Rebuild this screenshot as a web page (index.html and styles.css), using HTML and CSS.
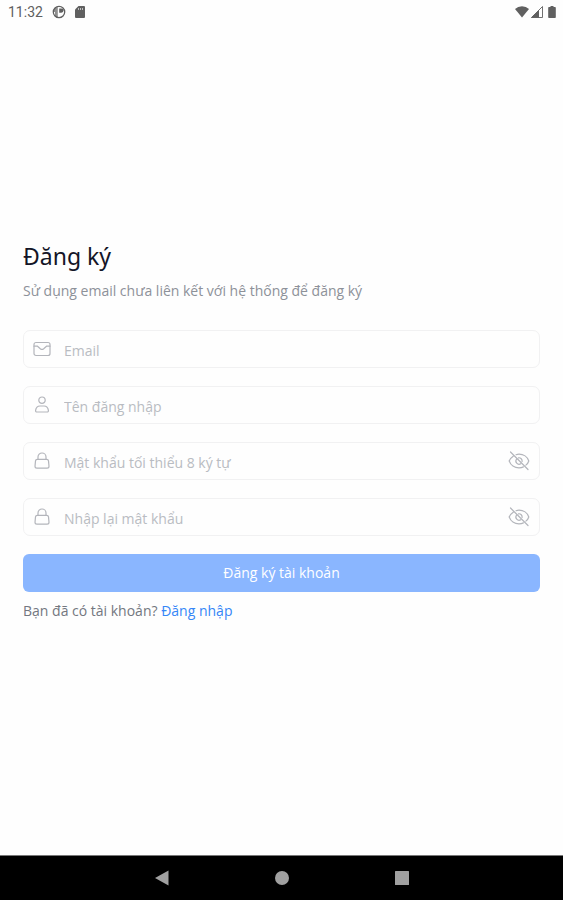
FILE: index.html
```html
<!DOCTYPE html>
<html lang="vi">
<head>
<meta charset="utf-8">
<meta name="viewport" content="width=device-width, initial-scale=1">
<title>Đăng ký</title>
<link rel="stylesheet" href="styles.css">
</head>
<body>
<svg class="defs" aria-hidden="true">
  <symbol id="lock" viewBox="0 0 18 18">
    <path d="M4.300 7.300h9.400q1.600 0 1.800 1.600l.5 5.400q0 1.900-1.900 1.900H3.900Q2 16.200 2 14.300l.5-5.400q.2-1.600 1.800-1.600z"/>
    <path d="M5 7.300V5a4 4 0 0 1 8 0v2.300"/>
  </symbol>
  <symbol id="eye-off" viewBox="0 0 22 22">
    <path d="M5.200 6.200C3 7.700 1.600 9.500 1.200 11c1.400 4 5.400 6.800 9.800 6.800 1.600 0 3.100-.3 4.400-.9M8 4.700c1-.3 2-.5 3-.5 4.400 0 8.400 2.800 9.800 6.800-.5 1.600-1.500 3-2.900 4.100M2.500 2l17.500 17.500"/>
    <path d="M8.600 9a3.200 3.200 0 0 0 4.200 4.700M10.500 7.800a3.200 3.200 0 0 1 3.600 3.700"/>
  </symbol>
</svg>
<header class="status">
  <div class="status-group">
    <time class="clock">11:32</time>
    <svg class="status-icon" viewBox="0 0 14 14" aria-hidden="true">
      <circle cx="7" cy="7" r="5.700" fill="none" stroke="currentColor" stroke-width="1.300"/>
      <path d="M5.800 1.500v11A5.700 5.700 0 0 1 3 11V7H1.500A6 6 0 0 1 5.800 1.500z" fill="currentColor" opacity=".7"/>
      <path d="M7.200 3.500h2.200a2.100 2.100 0 0 1 0 4.200H7.200z" fill="currentColor"/>
    </svg>
    <svg class="status-icon" viewBox="0 0 14 14" aria-hidden="true">
      <path d="M5.500 1H11a1 1 0 0 1 1 1v10a1 1 0 0 1-1 1H3a1 1 0 0 1-1-1V4.500z" fill="currentColor"/>
      <path d="M5.500 3v2M7.500 3v2M9.500 3v2" stroke="#fff" stroke-width=".6"/>
    </svg>
  </div>
  <div class="status-group signals">
    <svg class="status-icon" viewBox="0 0 14 14" aria-hidden="true"><path d="M0 4a10 10 0 0 1 14 0L7 12.500z" fill="currentColor"/></svg>
    <svg class="status-icon" viewBox="0 0 14 14" aria-hidden="true">
      <path d="M1.500 12.500 12.500 1.500v11z" fill="none" stroke="currentColor" stroke-width=".9"/>
      <path d="M1 12.800 9 5v7.800z" fill="currentColor"/>
    </svg>
    <svg class="status-icon" viewBox="0 0 14 14" aria-hidden="true"><path d="M5.500 1h3v1H10q.8 0 .8.800v9.400q0 .8-.8.800H4q-.8 0-.8-.8V2.800Q3.200 2 4 2h1.500z" fill="currentColor"/></svg>
  </div>
</header>
<main class="screen">
  <h1 class="title">Đăng ký</h1>
  <p class="subtitle">Sử dụng email chưa liên kết với hệ thống để đăng ký</p>
  <form class="form">
    <label class="field">
      <svg class="icon" viewBox="0 0 18 18" aria-hidden="true"><rect x="1" y="2.500" width="16" height="13" rx="2"/><path d="M1 6.200h3.500L7.300 8.700a2.700 2.700 0 0 0 3.400 0l2.800-2.500H17"/></svg>
      <input class="input" type="email" placeholder="Email" aria-label="Email">
    </label>
    <label class="field">
      <svg class="icon" viewBox="0 0 18 18" aria-hidden="true"><circle cx="9" cy="4.200" r="3.200"/><path d="M4 16q-1.600 0-1.400-1.600C3 11.500 5 10 7 10h4c2 0 4 1.500 4.400 4.400Q15.600 16 14 16z"/></svg>
      <input class="input" type="text" placeholder="Tên đăng nhập" aria-label="Tên đăng nhập">
    </label>
    <div class="field">
      <svg class="icon" aria-hidden="true"><use href="#lock"/></svg>
      <input class="input" type="password" placeholder="Mật khẩu tối thiểu 8 ký tự" aria-label="Mật khẩu">
      <button class="reveal" type="button" aria-label="Hiện mật khẩu"><svg class="eye" aria-hidden="true"><use href="#eye-off"/></svg></button>
    </div>
    <div class="field">
      <svg class="icon" aria-hidden="true"><use href="#lock"/></svg>
      <input class="input" type="password" placeholder="Nhập lại mật khẩu" aria-label="Nhập lại mật khẩu">
      <button class="reveal" type="button" aria-label="Hiện mật khẩu"><svg class="eye" aria-hidden="true"><use href="#eye-off"/></svg></button>
    </div>
    <button class="submit" type="submit">Đăng ký tài khoản</button>
  </form>
  <p class="login">Bạn đã có tài khoản? <a class="link" href="#">Đăng nhập</a></p>
</main>
<nav class="navbar" aria-label="Android">
  <button class="nav-button" type="button" aria-label="Back"><svg class="nav-icon" viewBox="0 0 16 16"><path d="M1 8 14.500.5v15z"/></svg></button>
  <button class="nav-button" type="button" aria-label="Home"><svg class="nav-icon" viewBox="0 0 16 16"><circle cx="8" cy="8" r="7"/></svg></button>
  <button class="nav-button" type="button" aria-label="Overview"><svg class="nav-icon" viewBox="0 0 16 16"><rect x="1" y="1" width="14" height="14" rx=".5"/></svg></button>
</nav>
</body>
</html>
```

FILE: styles.css
```css
* {
  box-sizing: border-box;
}

body {
  margin: 0;
  min-height: 100vh;
  display: flex;
  flex-direction: column;
  background: #fefefe;
  color: #737780;
  font: 14px/22px "Open Sans", "Noto Sans", sans-serif;
}

.defs {
  position: absolute;
  width: 0;
  height: 0;
}

.status {
  display: flex;
  justify-content: space-between;
  align-items: center;
  height: 24px;
  padding: 0 4px 0 8px;
  color: #606060;
}

.status-group {
  display: flex;
  align-items: center;
  gap: 7px;
}

.signals {
  gap: 1px;
}

.clock {
  font: 14px/22px Roboto, sans-serif;
  margin-right: 2px;
}

.status-icon {
  width: 14px;
  height: 14px;
}

.screen {
  flex: 1;
  display: flex;
  flex-direction: column;
  justify-content: center;
  padding: 0 23px 18px;
}

.title {
  margin: 0 0 8px;
  color: #141527;
  font-family: "Noto Sans", sans-serif;
  font-size: 23px;
  font-weight: 400;
  line-height: 32px;
}

.subtitle {
  margin: 0 0 28px;
  color: #8d9199;
}

.form {
  display: flex;
  flex-direction: column;
  gap: 18px;
}

.field {
  display: flex;
  align-items: center;
  height: 38px;
  padding: 0 9px;
  border: 1px solid #f1f1f2;
  border-radius: 7px;
}

.icon,
.eye {
  display: block;
  flex: none;
  width: 18px;
  height: 18px;
  fill: none;
  stroke: #b3b5bb;
  stroke-width: 1.2;
  stroke-linejoin: round;
  stroke-linecap: round;
}

.eye {
  width: 22px;
  height: 22px;
}

.input {
  flex: 1;
  min-width: 0;
  height: 36px;
  margin-left: 13px;
  padding: 3px 0 0;
  border: 0;
  outline: 0;
  background: none;
  color: #141527;
  font: inherit;
}

.input::placeholder {
  color: #b9bcc2;
  opacity: 1;
}

.reveal {
  padding: 0;
  border: 0;
  background: none;
}

.submit {
  height: 38px;
  padding: 0;
  border: 0;
  border-radius: 6px;
  background: #8ab6ff;
  color: #fff;
  font: inherit;
  font-weight: 500;
}

.login {
  margin: 8px 0 0;
}

.link {
  color: #3586f7;
  font-weight: 500;
  text-decoration: none;
}

.navbar {
  display: grid;
  grid-template-columns: repeat(3, 120px);
  justify-content: center;
  height: 45px;
  border-top: 1px solid #777;
  background: #000;
}

.nav-button {
  display: flex;
  align-items: center;
  justify-content: center;
  padding: 0;
  border: 0;
  background: none;
}

.nav-icon {
  width: 16px;
  height: 16px;
  fill: #a0a0a0;
}
```
